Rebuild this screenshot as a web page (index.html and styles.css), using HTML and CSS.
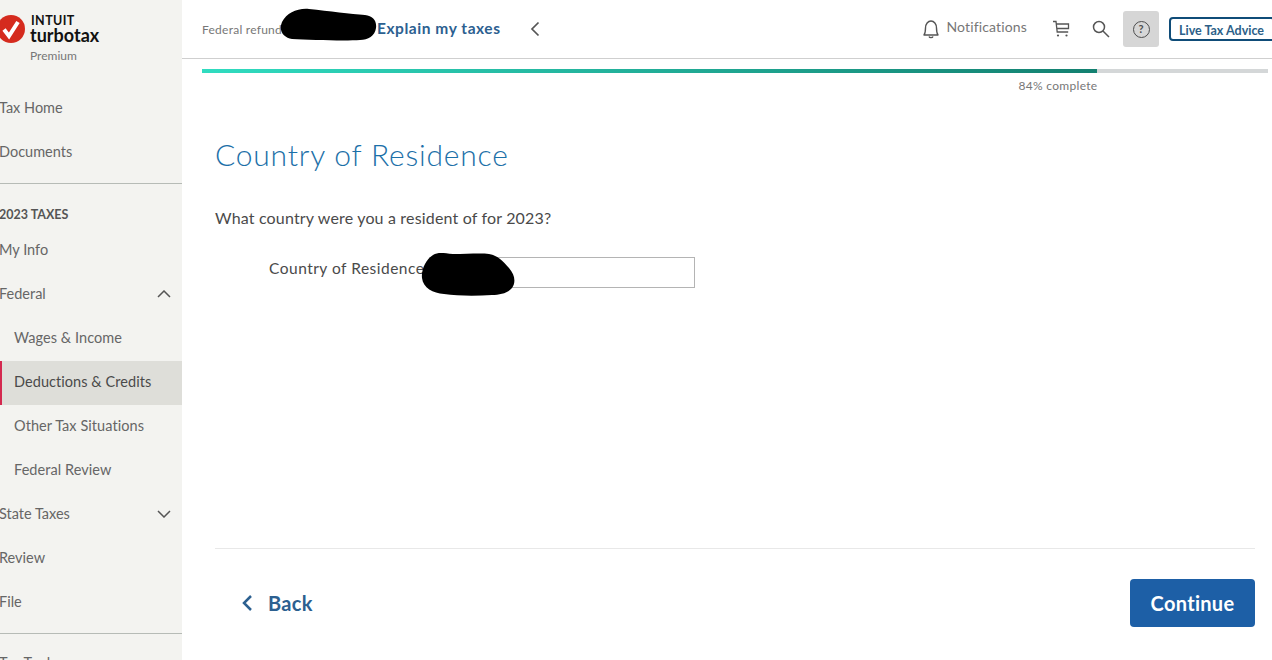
FILE: index.html
```html
<!DOCTYPE html>
<html lang="en">
<head>
<meta charset="utf-8">
<title>Country of Residence</title>
<link rel="stylesheet" href="styles.css">
</head>
<body>
<div class="app">
  <aside class="sidebar">
    <div class="brand">
      <svg class="brand-mark" width="30" height="30" viewBox="0 0 30 30"><circle cx="15" cy="15" r="14" fill="#d52b1e"/><path d="M8 15.500l5 6.500 9-14" fill="none" stroke="#fff" stroke-width="4"/></svg>
      <div class="brand-text">
        <div class="brand-intuit">INTUIT</div>
        <div class="brand-turbotax">turbotax</div>
        <div class="brand-tier">Premium</div>
      </div>
    </div>
    <nav class="nav">
      <a class="nav-item">Tax Home</a>
      <a class="nav-item">Documents</a>
      <div class="nav-rule"></div>
      <div class="nav-heading">2023 TAXES</div>
      <a class="nav-item">My Info</a>
      <a class="nav-item">Federal
        <svg class="chev" width="14" height="8" viewBox="0 0 14 8"><path d="M1 7l6-6 6 6" fill="none" stroke="#555" stroke-width="1.500"/></svg>
      </a>
      <a class="nav-item sub">Wages &amp; Income</a>
      <a class="nav-item sub active">Deductions &amp; Credits</a>
      <a class="nav-item sub">Other Tax Situations</a>
      <a class="nav-item sub">Federal Review</a>
      <a class="nav-item">State Taxes
        <svg class="chev" width="14" height="8" viewBox="0 0 14 8"><path d="M1 1l6 6 6-6" fill="none" stroke="#555" stroke-width="1.500"/></svg>
      </a>
      <a class="nav-item">Review</a>
      <a class="nav-item">File</a>
      <div class="nav-rule"></div>
      <a class="nav-item tools">Tax Tools</a>
    </nav>
  </aside>
  <main class="main">
    <header class="topbar">
      <span class="refund">Federal refund</span>
      <svg class="blob blob-refund" width="98" height="34" viewBox="0 0 98 34"><path d="M3 14C8 5 18 0 30 1c20 2 42 5 56 6 8 1 12 6 11 13-1 8-8 12-16 12-14 1-50 0-68-1C5 30-1 23 3 14z"/></svg>
      <a class="explain">Explain my taxes</a>
      <svg class="collapse" width="10" height="16" viewBox="0 0 10 16"><path d="M8.500 1.500L2 8l6.500 6.500" fill="none" stroke="#555" stroke-width="1.700"/></svg>
      <div class="tools-right">
        <svg class="icon-bell" width="18" height="20" viewBox="0 0 18 20"><path d="M2 16c1.500-2 1.500-3 1.500-7C3.500 5 6 2 9 2s5.500 3 5.500 7c0 4 0 5 1.500 7z" fill="none" stroke="#555" stroke-width="1.400" stroke-linejoin="round"/><path d="M7 17.500c.5 1.500 3.500 1.500 4 0" fill="none" stroke="#555" stroke-width="1.400"/></svg>
        <span class="notifications">Notifications</span>
        <svg class="icon-cart" width="18" height="18" viewBox="0 0 18 18"><path d="M1 1.500h3l1.200 10.500h11M5 8.500h11.500V4H4.500" fill="none" stroke="#555" stroke-width="1.300"/><circle cx="6" cy="15.500" r="1.100" fill="#555"/><circle cx="14.500" cy="15.500" r="1.100" fill="#555"/></svg>
        <svg class="icon-search" width="18" height="18" viewBox="0 0 18 18"><circle cx="7" cy="7" r="5.500" fill="none" stroke="#555" stroke-width="1.500"/><path d="M11 11l6 6" stroke="#555" stroke-width="1.500"/></svg>
        <div class="help"><span class="help-ring">?</span></div>
        <a class="advice">Live Tax Advice</a>
      </div>
    </header>
    <div class="progress">
      <div class="track"><div class="fill" style="width:84%"></div></div>
      <div class="progress-label" style="width:84%">84% complete</div>
    </div>
    <section class="content">
      <h1 class="title">Country of Residence</h1>
      <p class="question">What country were you a resident of for 2023?</p>
      <div class="field">
        <label class="field-label">Country of Residence</label>
        <div class="field-input"></div>
        <svg class="blob blob-field" width="94" height="44" viewBox="0 0 94 44"><path d="M1 26C0 18 5 7 12 3c5-3 10-2 20-1 14 0 28-1 36 0 8 1 14 7 20 14 6 7 7 14 3 20-4 5-12 7-20 7-16 1-34 1-48-1C12 41 2 36 1 26z"/></svg>
      </div>
    </section>
    <footer class="footer">
      <a class="back">
        <svg width="12" height="18" viewBox="0 0 12 18"><path d="M10 2L3 9l7 7" fill="none" stroke="#2c6090" stroke-width="2.500"/></svg>
        <span>Back</span>
      </a>
      <button class="continue">Continue</button>
    </footer>
  </main>
</div>
</body>
</html>
```
FILE: styles.css
```css
* { box-sizing: border-box; }
html, body { margin: 0; height: 660px; overflow: hidden; background: #fff; }
body { font-family: "Lato", "Open Sans", sans-serif; color: #4a4a4a; }
.app { display: flex; height: 660px; overflow: hidden; }

.sidebar { width: 182px; flex: none; background: #f3f3f0; overflow: hidden; }
.brand { height: 87px; display: flex; padding-top: 14px; }
.brand-mark { margin-left: -4px; flex: none; }
.brand-text { margin-left: 5px; }
.brand-intuit { font-size: 12.500px; line-height: 13px; font-weight: 700; letter-spacing: 0.4px; color: #111; }
.brand-turbotax { font-size: 18px; line-height: 17px; font-weight: 700; color: #111; margin-left: -1px; }
.brand-tier { font-size: 12px; line-height: 16px; margin-top: 4px; margin-left: -1px; color: #777; }

.nav-item { display: flex; align-items: center; justify-content: space-between; height: 44px; font-size: 14.500px; color: #666; padding: 0 11px 3px 0; margin-left: -1px; }
.nav-item.sub { margin-left: 0; padding-left: 14px; letter-spacing: 0.06px; }
.nav-item.active { background: #deded9; color: #4a4a4a; border-left: 2px solid #d4294f; padding-left: 12px; }
.nav-rule { height: 1px; background: #b6bbb6; margin: 8px 0 0; }
.nav-heading { height: 45px; padding-top: 23px; font-size: 12.500px; line-height: 16px; font-weight: 700; color: #555; margin-left: -1px; }
.nav-rule + .nav-item.tools { padding-top: 12px; padding-bottom: 0; }

.main { flex: 1; min-width: 0; display: flex; flex-direction: column; height: 660px; }
.topbar { position: relative; flex: none; height: 59px; border-bottom: 1px solid #cfcfcf; display: flex; align-items: center; padding-left: 20px; }
.refund { font-size: 12px; color: #777; width: 80px; white-space: nowrap; overflow: hidden; margin-top: 1px; letter-spacing: 0.25px; }
.blob { position: absolute; fill: #000; }
.blob-refund { left: 97px; top: 8px; }
.explain { margin: -2px 0 0 95px; font-size: 15.500px; font-weight: 700; color: #2c6090; white-space: nowrap; letter-spacing: 0.55px; }
.collapse { margin-left: 29px; }
.tools-right { margin-left: auto; display: flex; align-items: center; margin-right: -3px; }
.icon-bell { margin-right: -1px; }
.notifications { margin: -6px 0 0 7px; font-size: 14px; color: #777; letter-spacing: 0.15px; }
.icon-cart { margin-left: 25px; }
.icon-search { margin-left: 22px; }
.help { margin-left: 13px; width: 36px; height: 36px; background: #d6d6d6; border-radius: 3px; display: flex; align-items: center; justify-content: center; }
.help-ring { width: 17px; height: 17px; border: 1.500px solid #4d4d4d; border-radius: 50%; font-size: 11px; line-height: 14px; font-weight: 700; text-align: center; color: #4d4d4d; }
.advice { margin-left: 10px; width: 106px; height: 24px; border: 2px solid #0f4c78; border-radius: 4px; padding-left: 8px; font-size: 12.500px; line-height: 23px; font-weight: 700; color: #2c5f88; white-space: nowrap; }

.progress { flex: none; height: 44px; padding: 10px 4px 0 20px; }
.track { height: 4px; background: #d4d7d8; }
.fill { height: 4px; background: linear-gradient(90deg, #30dcc0, #138070); }
.progress-label { font-size: 12px; line-height: 16px; margin-top: 5px; text-align: right; color: #777; letter-spacing: 0.3px; }

.content { flex: 1; padding: 0 17px 0 33px; min-height: 0; }
.title { margin: 31px 0 0; font-size: 30px; line-height: 40px; font-weight: 300; color: #1c70a8; letter-spacing: 0.8px; }
.question { margin: 32px 0 0; font-size: 16px; line-height: 24px; color: #4a4a4a; letter-spacing: 0.17px; }
.field { position: relative; display: flex; align-items: center; margin: 27px 0 0 54px; height: 31px; }
.field-label { width: 160px; font-size: 15.500px; color: #4a4a4a; margin-top: -9px; letter-spacing: 0.5px; white-space: nowrap; }
.field-input { width: 266px; height: 31px; border: 1px solid #b4b4b4; }
.blob-field { left: 152px; top: -5px; }

.footer { flex: none; height: 112px; margin: 0 17px 0 33px; border-top: 1px solid #e8e8e8; display: flex; justify-content: space-between; align-items: flex-start; padding-top: 30px; }
.back { display: flex; align-items: center; height: 48px; gap: 15px; padding-left: 26px; font-size: 20px; font-weight: 700; color: #2c6090; letter-spacing: 0.3px; }
.continue { width: 125px; height: 48px; border: 0; border-radius: 4px; background: #1d5fa6; color: #fff; font-family: inherit; font-size: 20px; font-weight: 700; letter-spacing: 0.3px; }
```
